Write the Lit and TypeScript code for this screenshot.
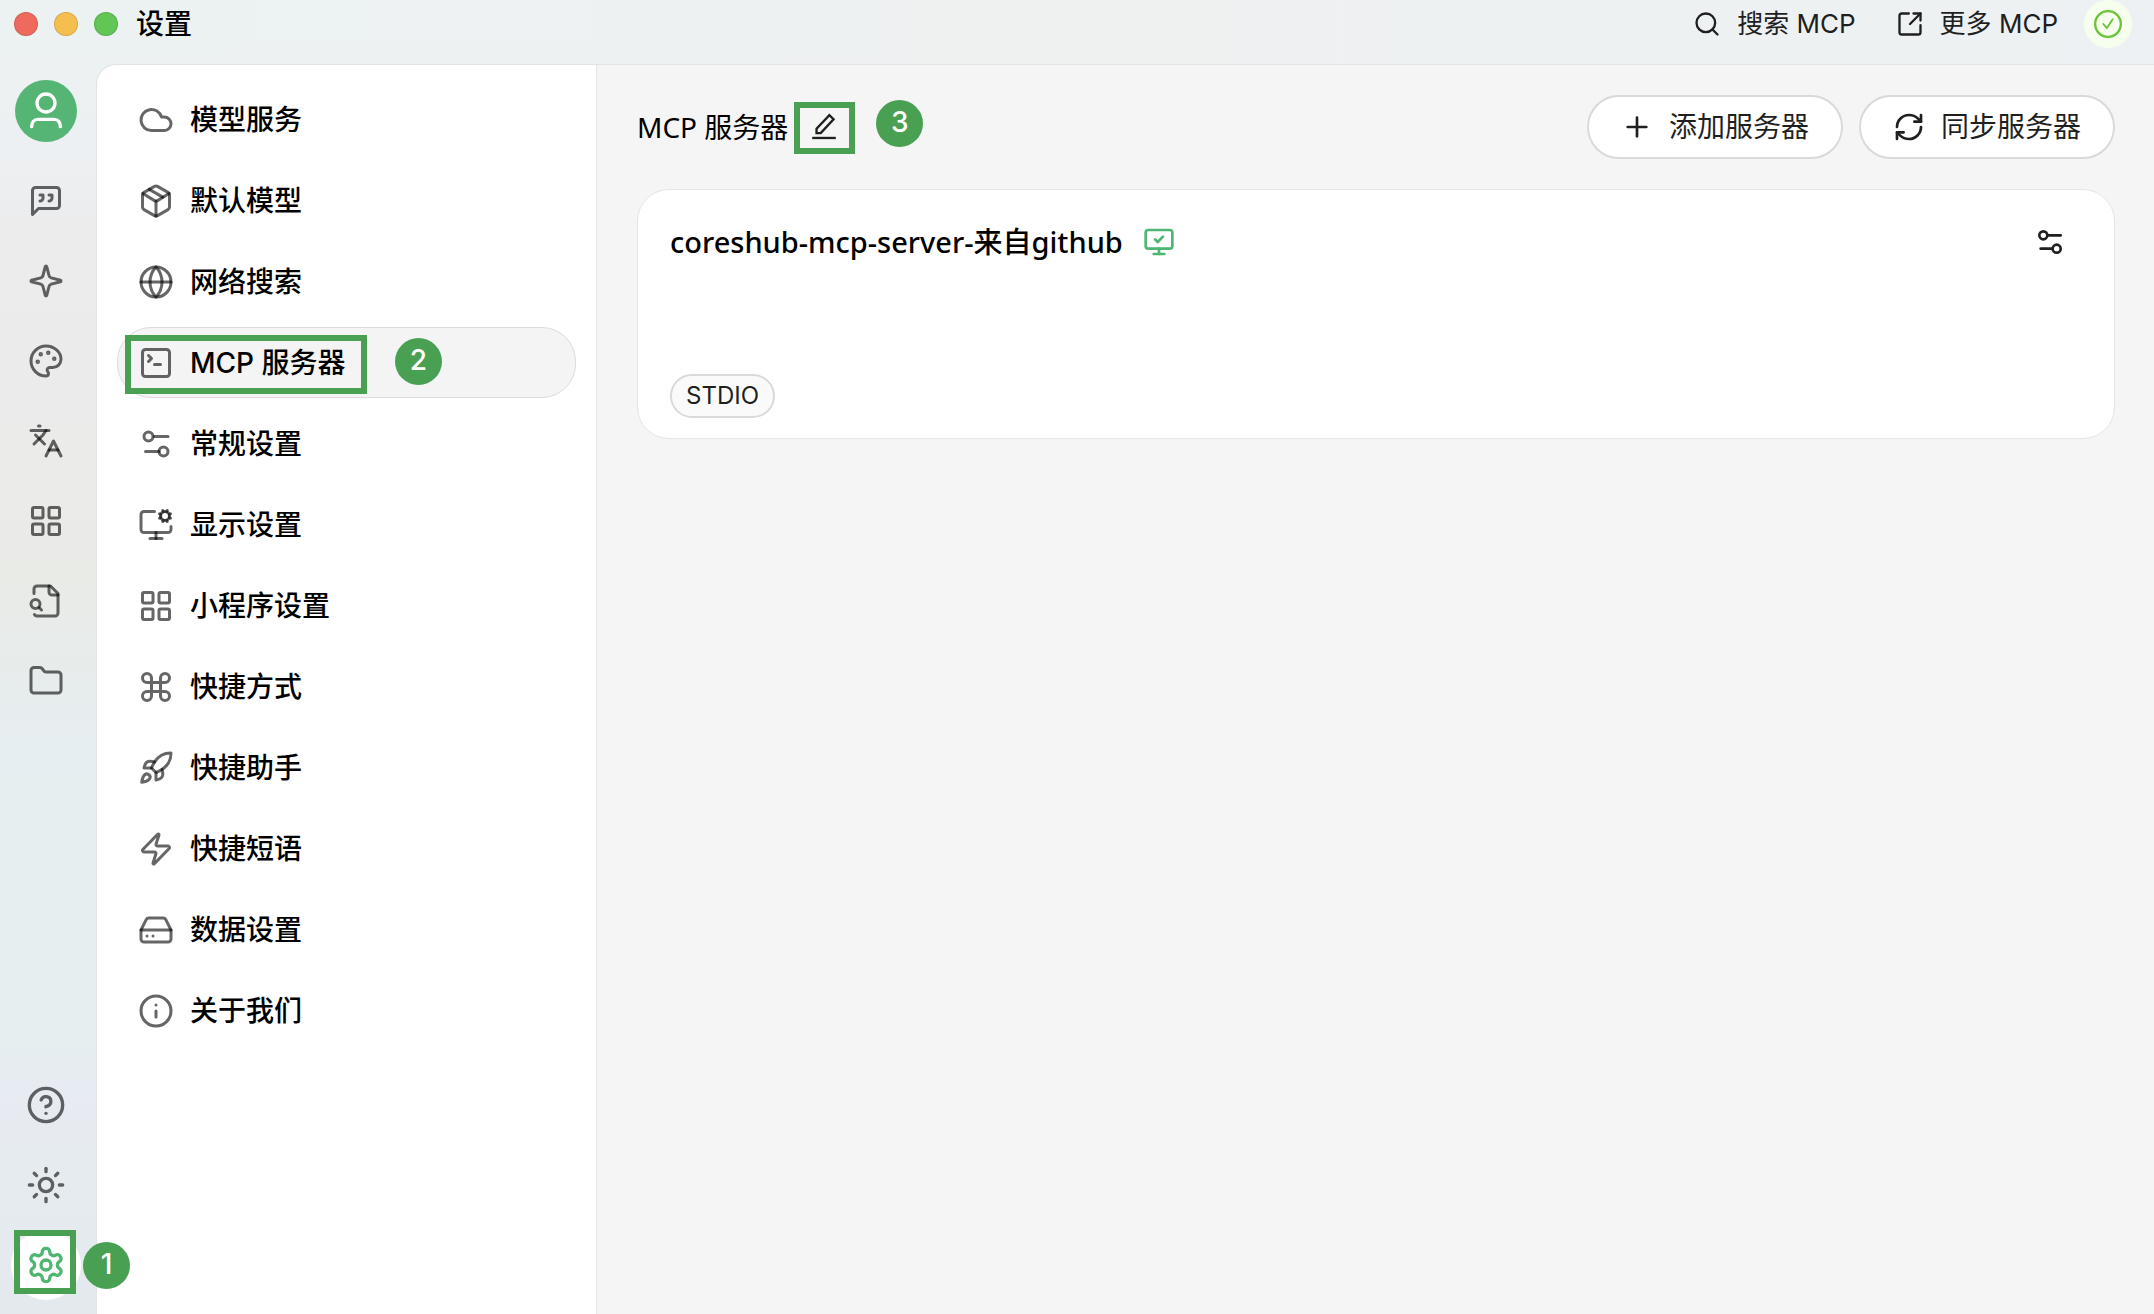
import { LitElement, html, css, svg, nothing } from "lit";
import { customElement, property } from "lit/decorators.js";

const ICONS: Record<string, unknown> = {
  cloud: svg`<path d="M17.5 19H9a7 7 0 1 1 6.71-9h1.79a4.5 4.5 0 1 1 0 9Z"/>`,
  package: svg`<path d="M11 21.73a2 2 0 0 0 2 0l7-4A2 2 0 0 0 21 16V8a2 2 0 0 0-1-1.73l-7-4a2 2 0 0 0-2 0l-7 4A2 2 0 0 0 3 8v8a2 2 0 0 0 1 1.73z"/><path d="M12 22V12"/><path d="m3.3 7 7.703 4.734a2 2 0 0 0 1.994 0L20.7 7"/><path d="m7.5 4.27 9 5.15"/>`,
  globe: svg`<circle cx="12" cy="12" r="10"/><path d="M12 2a14.5 14.5 0 0 0 0 20 14.5 14.5 0 0 0 0-20"/><path d="M2 12h20"/>`,
  terminal: svg`<path d="m7 11 2-2-2-2"/><path d="M11 13h4"/><rect width="18" height="18" x="3" y="3" rx="2"/>`,
  sliders: svg`<path d="M20 7h-9"/><path d="M14 17H5"/><circle cx="17" cy="17" r="3"/><circle cx="7" cy="7" r="3"/>`,
  monitorCog: svg`<path d="M12 17v4"/><path d="m15.2 4.9-.9-.4"/><path d="m15.2 7.1-.9.4"/><path d="m16.9 3.2-.4-.9"/><path d="m16.9 8.8-.4.9"/><path d="m19.5 2.3-.4.9"/><path d="m19.5 9.7-.4-.9"/><path d="m21.7 4.5-.9.4"/><path d="m21.7 7.5-.9-.4"/><path d="M22 13v2a2 2 0 0 1-2 2H4a2 2 0 0 1-2-2V5a2 2 0 0 1 2-2h7"/><path d="M8 21h8"/><circle cx="18" cy="6" r="3"/>`,
  grid: svg`<rect width="7" height="7" x="3" y="3" rx="1"/><rect width="7" height="7" x="14" y="3" rx="1"/><rect width="7" height="7" x="14" y="14" rx="1"/><rect width="7" height="7" x="3" y="14" rx="1"/>`,
  command: svg`<path d="M15 6v12a3 3 0 1 0 3-3H6a3 3 0 1 0 3 3V6a3 3 0 1 0-3 3h12a3 3 0 1 0-3-3"/>`,
  rocket: svg`<path d="M4.5 16.5c-1.5 1.26-2 5-2 5s3.74-.5 5-2c.71-.84.7-2.13-.09-2.91a2.18 2.18 0 0 0-2.91-.09z"/><path d="m12 15-3-3a22 22 0 0 1 2-3.95A12.88 12.88 0 0 1 22 2c0 2.72-.78 7.5-6 11a22.35 22.35 0 0 1-4 2z"/><path d="M9 12H4s.55-3.03 2-4c1.62-1.08 5 0 5 0"/><path d="M12 15v5s3.03-.55 4-2c1.08-1.62 0-5 0-5"/>`,
  zap: svg`<path d="M4 14a1 1 0 0 1-.78-1.63l9.9-10.2a.5.5 0 0 1 .86.46l-1.92 6.02A1 1 0 0 0 13 10h7a1 1 0 0 1 .78 1.63l-9.9 10.2a.5.5 0 0 1-.86-.46l1.92-6.02A1 1 0 0 0 11 14z"/>`,
  drive: svg`<path d="M22 12H2"/><path d="M5.45 5.11 2 12v6a2 2 0 0 0 2 2h16a2 2 0 0 0 2-2v-6l-3.45-6.89A2 2 0 0 0 16.76 4H7.24a2 2 0 0 0-1.79 1.11z"/><path d="M6 16h.01"/><path d="M10 16h.01"/>`,
  info: svg`<circle cx="12" cy="12" r="10"/><path d="M12 16v-4"/><path d="M12 8h.01"/>`,
  quote: svg`<path d="M21 15a2 2 0 0 1-2 2H7l-4 4V5a2 2 0 0 1 2-2h14a2 2 0 0 1 2 2z"/><path d="M8 12a2 2 0 0 0 2-2V8H8"/><path d="M14 12a2 2 0 0 0 2-2V8h-2"/>`,
  sparkle: svg`<path d="M9.937 15.5A2 2 0 0 0 8.5 14.063l-6.135-1.582a.5.5 0 0 1 0-.962L8.5 9.936A2 2 0 0 0 9.937 8.5l1.582-6.135a.5.5 0 0 1 .963 0L14.063 8.5A2 2 0 0 0 15.5 9.937l6.135 1.581a.5.5 0 0 1 0 .964L15.5 14.063a2 2 0 0 0-1.437 1.437l-1.582 6.135a.5.5 0 0 1-.963 0z"/>`,
  palette: svg`<circle cx="13.5" cy="6.5" r=".5" fill="currentColor"/><circle cx="17.5" cy="10.5" r=".5" fill="currentColor"/><circle cx="8.5" cy="7.5" r=".5" fill="currentColor"/><circle cx="6.5" cy="12.5" r=".5" fill="currentColor"/><path d="M12 2C6.5 2 2 6.5 2 12s4.5 10 10 10c.926 0 1.648-.746 1.648-1.688 0-.437-.18-.835-.437-1.125-.29-.289-.438-.652-.438-1.125a1.64 1.64 0 0 1 1.668-1.668h1.996c3.051 0 5.555-2.503 5.555-5.554C21.965 6.012 17.461 2 12 2z"/>`,
  languages: svg`<path d="m5 8 6 6"/><path d="m4 14 6-6 2-3"/><path d="M2 5h12"/><path d="M7 2h1"/><path d="m22 22-5-10-5 10"/><path d="M14 18h6"/>`,
  fileSearch: svg`<path d="M14 2v4a2 2 0 0 0 2 2h4"/><path d="M4.268 21a2 2 0 0 0 1.727 1H18a2 2 0 0 0 2-2V7l-5-5H6a2 2 0 0 0-2 2v3"/><path d="m9 18-1.5-1.5"/><circle cx="5" cy="14" r="3"/>`,
  folder: svg`<path d="M20 20a2 2 0 0 0 2-2V8a2 2 0 0 0-2-2h-7.9a2 2 0 0 1-1.69-.9L9.6 3.9A2 2 0 0 0 7.93 3H4a2 2 0 0 0-2 2v13a2 2 0 0 0 2 2Z"/>`,
  help: svg`<circle cx="12" cy="12" r="10"/><path d="M9.09 9a3 3 0 0 1 5.83 1c0 2-3 3-3 3"/><path d="M12 17h.01"/>`,
  sun: svg`<circle cx="12" cy="12" r="4"/><path d="M12 2v2"/><path d="M12 20v2"/><path d="m4.93 4.93 1.41 1.41"/><path d="m17.66 17.66 1.41 1.41"/><path d="M2 12h2"/><path d="M20 12h2"/><path d="m6.34 17.66-1.41 1.41"/><path d="m19.07 4.93-1.41 1.41"/>`,
  gear: svg`<path d="M12.22 2h-.44a2 2 0 0 0-2 2v.18a2 2 0 0 1-1 1.73l-.43.25a2 2 0 0 1-2 0l-.15-.08a2 2 0 0 0-2.73.73l-.22.38a2 2 0 0 0 .73 2.73l.15.1a2 2 0 0 1 1 1.72v.51a2 2 0 0 1-1 1.74l-.15.09a2 2 0 0 0-.73 2.73l.22.38a2 2 0 0 0 2.73.73l.15-.08a2 2 0 0 1 2 0l.43.25a2 2 0 0 1 1 1.73V20a2 2 0 0 0 2 2h.44a2 2 0 0 0 2-2v-.18a2 2 0 0 1 1-1.73l.43-.25a2 2 0 0 1 2 0l.15.08a2 2 0 0 0 2.73-.73l.22-.39a2 2 0 0 0-.73-2.73l-.15-.08a2 2 0 0 1-1-1.74v-.5a2 2 0 0 1 1-1.74l.15-.09a2 2 0 0 0 .73-2.73l-.22-.38a2 2 0 0 0-2.73-.73l-.15.08a2 2 0 0 1-2 0l-.43-.25a2 2 0 0 1-1-1.73V4a2 2 0 0 0-2-2z"/><circle cx="12" cy="12" r="3"/>`,
  search: svg`<circle cx="11" cy="11" r="8"/><path d="m21 21-4.3-4.3"/>`,
  external: svg`<path d="M21 13v6a2 2 0 0 1-2 2H5a2 2 0 0 1-2-2V5a2 2 0 0 1 2-2h6"/><path d="m21 3-9 9"/><path d="M15 3h6v6"/>`,
  check: svg`<circle cx="12" cy="12" r="11"/><path d="m8 12 3 3.6 5-7.6" stroke-width="1.6"/>`,
  plus: svg`<path d="M5 12h14"/><path d="M12 5v14"/>`,
  refresh: svg`<path d="M3 12a9 9 0 0 1 9-9 9.75 9.75 0 0 1 6.74 2.74L21 8"/><path d="M21 3v5h-5"/><path d="M21 12a9 9 0 0 1-9 9 9.75 9.75 0 0 1-6.74-2.74L3 16"/><path d="M8 16H3v5"/>`,
  monitorCheck: svg`<path d="m9 10 2 2 4-4"/><rect width="20" height="14" x="2" y="3" rx="2"/><path d="M12 17v4"/><path d="M8 21h8"/>`,
  edit: svg`<path d="M1.9 21.4h20.2" stroke-linecap="butt"/><path d="M5.6 17.2v-3.8L16.6 1.8l3.6 3.6L9.2 17.2z" stroke-linejoin="miter"/>`,
  user: svg`<circle cx="12" cy="7.2" r="5.4"/><path d="M3.4 21.4c0-2.6 1.4-4.4 3.8-4.4h9.6c2.4 0 3.8 1.8 3.8 4.4"/>`,
};

@customElement("ui-icon")
export class UiIcon extends LitElement {
  static styles = css`
    :host { display: block; flex: none; line-height: 0; }
    .glyph {
      display: block;
      width: 100%;
      height: 100%;
      fill: none;
      stroke: currentColor;
      stroke-width: 2;
      stroke-linecap: round;
      stroke-linejoin: round;
      overflow: visible;
    }
  `;
  @property() name = "";
  render() {
    return html`<svg class="glyph" viewBox="0 0 24 24" aria-hidden="true">${ICONS[this.name]}</svg>`;
  }
}

const RAIL_TOP = [
  ["quote", "助手"], ["sparkle", "智能体"], ["palette", "绘画"], ["languages", "翻译"],
  ["grid", "小程序"], ["fileSearch", "知识库"], ["folder", "文件"],
];
const RAIL_BOTTOM = [["help", "帮助"], ["sun", "主题"], ["gear", "设置"]];
const MENU = [
  ["cloud", "模型服务"], ["package", "默认模型"], ["globe", "网络搜索"], ["terminal", "MCP 服务器"],
  ["sliders", "常规设置"], ["monitorCog", "显示设置"], ["grid", "小程序设置"], ["command", "快捷方式"],
  ["rocket", "快捷助手"], ["zap", "快捷短语"], ["drive", "数据设置"], ["info", "关于我们"],
];

@customElement("app-root")
export class AppRoot extends LitElement {
  static styles = css`
    :host {
      display: flex;
      flex-direction: column;
      min-height: 100vh;
      box-sizing: border-box;
      color: #000;
      font: 400 28px/40px Inter, "Noto Sans CJK SC", sans-serif;
      background:
        linear-gradient(90deg, transparent 96px, #eff1f1 50%, #edf1f3 100%) top / 100% 64px no-repeat,
        linear-gradient(180deg, #ecf2f2 0, #edf0f2 150px, #ececed 230px, #ebebeb 400px, #ebebe9 500px,
          #e9ebe7 580px, #e7ecec 680px, #e7eef1 740px, #e6eef0 1040px, #e7ebf2 1090px, #e6ebef 1180px, #e4e9ee 100%);
    }
    *, *::before { box-sizing: border-box; }
    button, a { font: inherit; color: inherit; text-decoration: none; }
    button { margin: 0; padding: 0; border: 0; background: none; cursor: pointer; }

    .titlebar { display: flex; align-items: center; height: 48px; margin-bottom: 16px; padding: 0 22px 0 14px; }
    .lights { display: flex; gap: 16px; margin-right: 18px; }
    .light { width: 24px; height: 24px; border-radius: 50%; border: 1px solid rgb(0 0 0 / 12%); }
    .red { background: #ee6a5f; }
    .yellow { background: #f5bf4f; }
    .green { background: #62c655; }
    .title { margin: 0 auto 0 0; font: inherit; font-weight: 500; }
    .links { display: flex; align-items: center; gap: 40px; margin-right: 26px; font-size: 26px; color: #1f1f1f; }
    .link { display: flex; align-items: center; gap: 16px; }
    .link ui-icon { width: 28px; height: 28px; }
    .status { display: grid; place-items: center; width: 48px; height: 48px; border-radius: 50%; background: #f6ffed; color: #6cc33a; }
    .status ui-icon { width: 28px; height: 28px; }

    .body { display: flex; flex: 1; }
    .rail { display: flex; flex-direction: column; align-items: center; gap: 10px; width: 96px; padding: 16px 4px 14px 0; }
    .avatar { display: grid; place-items: center; width: 62px; height: 62px; margin-bottom: 14px; border-radius: 50%; background: #55b574; color: #fff; }
    .avatar ui-icon { width: 40px; height: 40px; }
    .rail-button { position: relative; display: grid; place-items: center; width: 70px; height: 70px; border-radius: 50%; color: rgb(0 0 0 / 60%); }
    .rail-button ui-icon { width: 36px; height: 36px; }
    .rail-foot { display: flex; flex-direction: column; gap: 10px; margin-top: auto; }
    .rail-foot ui-icon { width: 40px; height: 40px; }
    .flat { color: #5c6062; }
    .current { background: #fff; color: #4fb573; }

    .panel { display: flex; flex: 1; min-width: 0; border: 1px solid #e2e4e4; border-width: 1px 0 0 1px; border-top-left-radius: 20px; background: #f5f5f5; }
    .menu { display: flex; flex-direction: column; gap: 10px; width: 500px; padding: 19px 20px; border-right: 1px solid #e4e4e4; border-top-left-radius: 20px; background: #fff; font-weight: 500; }
    .item { position: relative; display: flex; align-items: center; gap: 16px; height: 71px; padding: 0 20px; border: 1px solid transparent; border-radius: 34px; }
    .item ui-icon { width: 36px; height: 36px; color: rgb(0 0 0 / 60%); }
    .selected { border-color: #dcdcdc; background: #f4f4f4; }

    .content { flex: 1; min-width: 0; padding: 30px 39px 30px 40px; }
    .head { display: flex; align-items: center; gap: 16px; margin-bottom: 30px; }
    .heading { display: flex; align-items: center; gap: 22px; margin: 0 auto 0 0; font: 400 28px/40px "Noto Sans", "Noto Sans CJK SC", sans-serif; }
    .edit { position: relative; width: 28px; height: 28px; color: #1f1f1f; }
    .action { display: flex; align-items: center; gap: 16px; height: 64px; padding: 0 32px; border: 2px solid #d9d9d9; border-radius: 32px; background: #fff; color: #1f1f1f; }
    .action ui-icon { width: 32px; height: 32px; }

    .card { display: flex; flex-direction: column; justify-content: space-between; align-items: flex-start; min-height: 250px; padding: 20px 32px; border: 1px solid #e5e5e5; border-radius: 32px; background: #fff; }
    .card-head { display: flex; align-items: center; gap: 20px; width: 100%; height: 64px; }
    .name { margin: 0; font: 500 29px/40px "Noto Sans", "Noto Sans CJK SC", sans-serif; }
    .server { width: 32px; height: 32px; color: #4fb573; }
    .config { margin: 0 16px 0 auto; width: 32px; height: 32px; color: #1f1f1f; }
    .tag { height: 44px; padding: 0 14px; border: 2px solid #d9d9d9; border-radius: 22px; background: #fafafa; color: #1f1f1f; font: 400 24px/40px Inter, sans-serif; }

    .frame { position: absolute; border: 6px solid #4aa052; pointer-events: none; }
    .badge { position: absolute; width: 47px; height: 47px; border-radius: 50%; background: #4aa052; color: #fff; font: 500 28px/44px Inter, sans-serif; text-align: center; z-index: 1; }
    .frame-gear { left: 3px; top: 0; width: 62px; height: 64px; }
    .badge-gear { left: 72px; top: 12px; }
    .frame-item { left: 7px; top: 7px; width: 242px; height: 59px; }
    .badge-item { left: 277px; top: 10px; }
    .frame-edit { left: -16px; top: -11px; width: 61px; height: 52px; }
    .badge-edit { left: 66px; top: -13px; }
  `;

  private mark(kind: string, label: string) {
    return html`<span class="frame frame-${kind}"></span><span class="badge badge-${kind}">${label}</span>`;
  }

  render() {
    return html`
      <header class="titlebar">
        <div class="lights"><span class="light red"></span><span class="light yellow"></span><span class="light green"></span></div>
        <h1 class="title">设置</h1>
        <nav class="links">
          <a class="link" href="#search"><ui-icon name="search"></ui-icon>搜索 MCP</a>
          <a class="link" href="#more"><ui-icon name="external"></ui-icon>更多 MCP</a>
        </nav>
        <button class="status" aria-label="状态"><ui-icon name="check"></ui-icon></button>
      </header>
      <div class="body">
        <nav class="rail">
          <button class="avatar" aria-label="用户"><ui-icon name="user"></ui-icon></button>
          ${RAIL_TOP.map(([icon, label]) => html`<button class="rail-button" aria-label=${label}><ui-icon name=${icon}></ui-icon></button>`)}
          <div class="rail-foot">
            ${RAIL_BOTTOM.map(([icon, label]) => html`
              <button class="rail-button ${icon === "gear" ? "current" : "flat"}" aria-label=${label}>
                <ui-icon name=${icon}></ui-icon>${icon === "gear" ? this.mark("gear", "1") : nothing}
              </button>`)}
          </div>
        </nav>
        <div class="panel">
          <nav class="menu">
            ${MENU.map(([icon, label]) => html`
              <a class="item ${icon === "terminal" ? "selected" : ""}" href="#${icon}">
                <ui-icon name=${icon}></ui-icon>${label}${icon === "terminal" ? this.mark("item", "2") : nothing}
              </a>`)}
          </nav>
          <main class="content">
            <div class="head">
              <h2 class="heading">MCP 服务器
                <button class="edit" aria-label="编辑"><ui-icon name="edit"></ui-icon>${this.mark("edit", "3")}</button>
              </h2>
              <button class="action"><ui-icon name="plus"></ui-icon>添加服务器</button>
              <button class="action"><ui-icon name="refresh"></ui-icon>同步服务器</button>
            </div>
            <section class="card">
              <div class="card-head">
                <h3 class="name">coreshub-mcp-server-来自github</h3>
                <ui-icon class="server" name="monitorCheck"></ui-icon>
                <button class="config" aria-label="配置"><ui-icon name="sliders"></ui-icon></button>
              </div>
              <span class="tag">STDIO</span>
            </section>
          </main>
        </div>
      </div>
    `;
  }
}
